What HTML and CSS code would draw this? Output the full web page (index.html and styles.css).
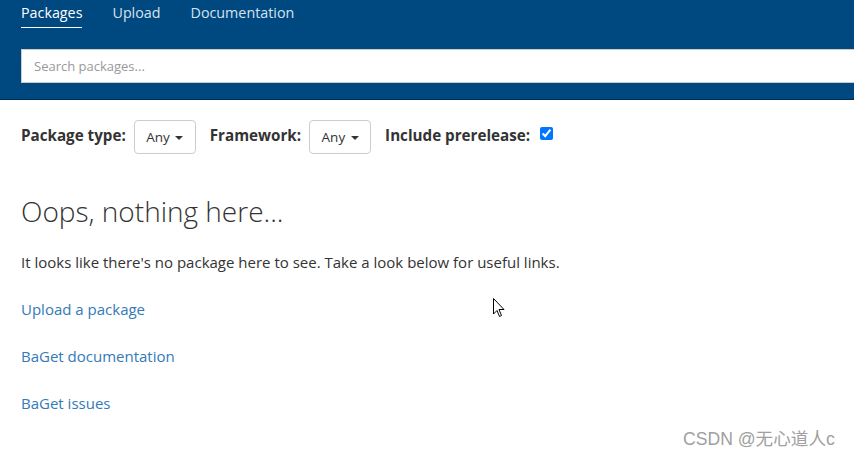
FILE: index.html
```html
<!DOCTYPE html>
<html lang="en">
<head>
  <meta charset="UTF-8" />
  <title>BaGet</title>
  <link rel="stylesheet" href="styles.css">
</head>
<body>
  <div class="header">
    <div class="nav">
      <a class="nav-link active">Packages</a>
      <a class="nav-link">Upload</a>
      <a class="nav-link">Documentation</a>
    </div>
    <div class="search">
      <input type="text" placeholder="Search packages...">
    </div>
  </div>

  <div class="filters">
    <span class="label">Package type:</span>
    <button class="dropdown">Any <span class="caret"></span></button>
    <span class="label">Framework:</span>
    <button class="dropdown">Any <span class="caret"></span></button>
    <span class="label">Include prerelease:</span>
    <input class="check" type="checkbox" checked>
  </div>

  <div class="content">
    <h2>Oops, nothing here...</h2>
    <p>It looks like there's no package here to see. Take a look below for useful links.</p>
    <p><a href="#">Upload a package</a></p>
    <p><a href="#">BaGet documentation</a></p>
    <p><a href="#">BaGet issues</a></p>
  </div>

  <svg class="cursor" width="12" height="20" viewBox="0 0 12 20">
    <path d="M0.5 0.5 L0.5 16 L4 12.5 L6.5 18.5 L8.5 17.5 L6 11.5 L11 11.5 Z" fill="#fff" stroke="#000" stroke-width="1"/>
  </svg>

  <div class="watermark">CSDN @无心道人c</div>
</body>
</html>
```

FILE: styles.css
```css
body {
  margin: 0;
  font-family: "Open Sans", "Noto Sans", sans-serif;
  color: #333;
  background: #fff;
  overflow: hidden;
}
.header {
  background-color: #004880;
  border-bottom: 1px solid #002c50;
  height: 100px;
  box-sizing: border-box;
  padding: 0 0 0 21px;
}
.nav {
  display: flex;
  height: 40px;
}
.nav-link {
  color: #d5e3f0;
  font-size: 14.3px;
  line-height: 25px;
  height: 27px;
  margin-right: 30px;
  text-decoration: none;
}
.nav-link.active {
  color: #fff;
  border-bottom: 1px solid #fff;
}
.search {
  margin-top: 9px;
}
.search input {
  display: block;
  width: 100%;
  height: 34px;
  box-sizing: border-box;
  border: 1px solid #ccc;
  border-right: none;
  padding: 0 12px;
  font-family: inherit;
  font-size: 13px;
  outline: none;
}
.search input::placeholder {
  color: #999;
}
.filters {
  display: flex;
  align-items: flex-start;
  padding: 20px 21px 0;
  height: 34px;
}
.label {
  font-weight: bold;
  font-size: 15.2px;
  margin-right: 8px;
  line-height: 30px;
}
.dropdown {
  width: 62px;
  height: 34px;
  padding: 0;
  border: 1px solid #ccc;
  border-radius: 4px;
  background: #fff;
  color: #333;
  font-family: inherit;
  font-size: 13.5px;
  margin-right: 14px;
}
.caret {
  display: inline-block;
  width: 0;
  height: 0;
  margin-left: 2px;
  vertical-align: middle;
  border-top: 4px solid #333;
  border-left: 4px solid transparent;
  border-right: 4px solid transparent;
}
.check {
  margin: 7px 0 0 2px;
  width: 13px;
  height: 13px;
  accent-color: #0075ff;
}
.content {
  padding: 0 21px;
}
.content h2 {
  font-weight: 300;
  font-size: 28px;
  margin: 37px 0 0;
  line-height: 40px;
}
.content p {
  font-size: 15px;
  margin: 0;
  line-height: 20px;
  margin-top: 27px;
}
.content h2 + p {
  margin-top: 21px;
}
.content a {
  color: #337ab7;
  text-decoration: none;
}
.cursor {
  position: absolute;
  left: 493px;
  top: 298px;
}
.watermark {
  position: absolute;
  left: 683px;
  top: 425px;
  color: #a0a0a0;
  font-family: "Liberation Sans", "Noto Sans CJK SC", sans-serif;
  font-size: 17.6px;
}
```
